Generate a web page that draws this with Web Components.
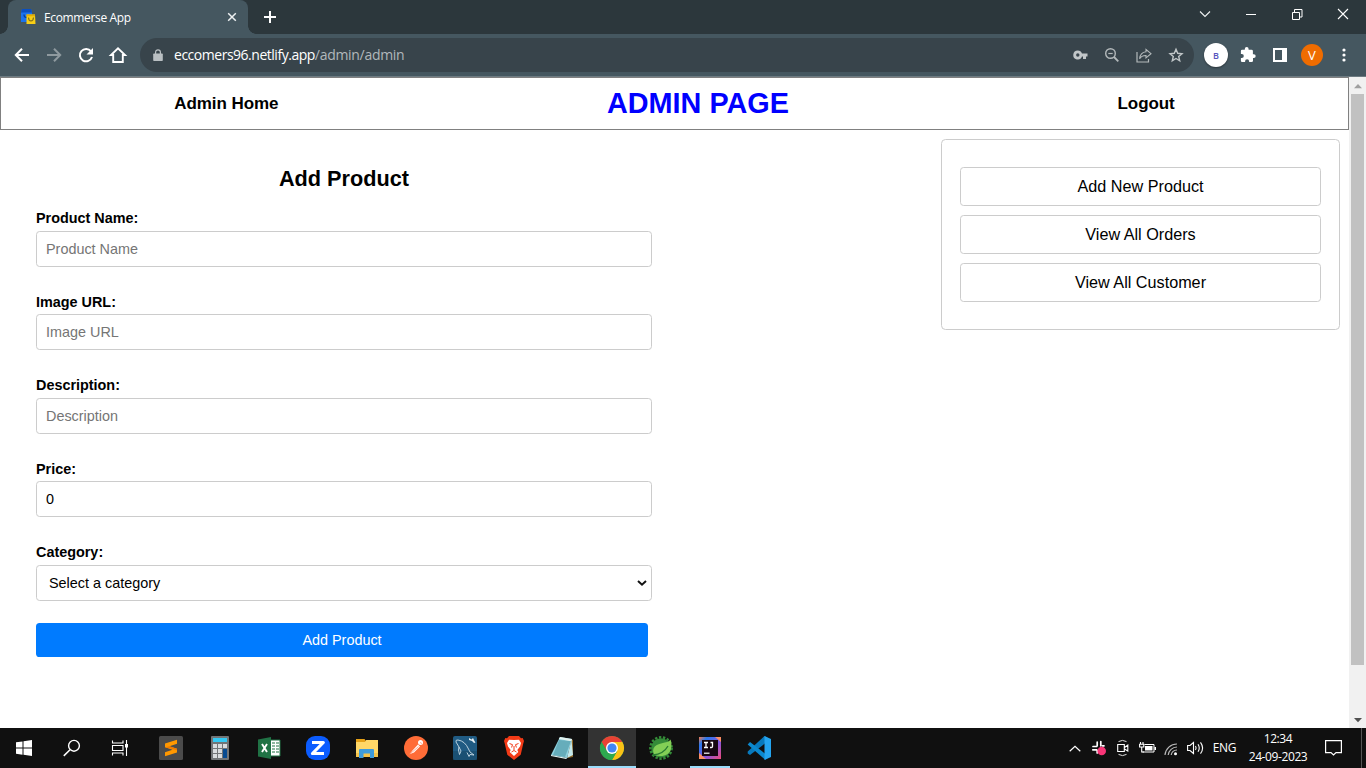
<!DOCTYPE html>
<html lang="en">
<head>
<meta charset="utf-8">
<title>Ecommerse App</title>
<style>
html,body{margin:0;height:100%;overflow:hidden;background:#fff;font-family:"Liberation Sans",Arial,sans-serif}
</style>
</head>
<body>
<desktop-screen></desktop-screen>
<script>
const UI = '"Open Sans","Noto Sans",sans-serif';
function define(name, markup, setup) {
  const t = document.createElement('template');
  t.innerHTML = markup;
  customElements.define(name, class extends HTMLElement {
    constructor() {
      super();
      this.attachShadow({mode: 'open'}).append(t.content.cloneNode(true));
    }
    connectedCallback() { if (setup) setup(this, this.shadowRoot); }
  });
}

/* Each entry: [width, height, svg content] */
const ICONS = {
  bags: [16,16,'<path d="M1 4 2 0h9l1 4v9H1z" fill="#1a73f0"/><path d="M1 3.500 2 0h9l1 3.500z" fill="#0b4fc0"/><path d="M4 5.500c0 4 4 3.500 4 1" fill="none" stroke="#0b3d94" stroke-width="1.200"/><path d="M6.500 5.500H15l.5 9.500h-9z" fill="#f8cf16"/><path d="M6.500 5.500H15v1.800H6.500z" fill="#e3ad07"/><path d="M8.500 8.500c.2 4.500 4.700 4.500 5 0" fill="none" stroke="#86721b" stroke-width="1.200"/>'],
  tabclose: [10,10,'<path d="m1.200 1.200 7.600 7.600m0-7.600L1.200 8.800" stroke="#eef1f2" stroke-width="1.500"/>'],
  plus: [14,14,'<path d="M7 1v12M1 7h12" stroke="#fff" stroke-width="2"/>'],
  chevdown: [12,8,'<path d="m1 1.500 5 5 5-5" fill="none" stroke="#f0f2f3" stroke-width="1.100"/>'],
  minimize: [10,10,'<path d="M0 5.500h10" stroke="#fff"/>'],
  restore: [11,11,'<path d="M.5 3.500h7v7h-7zM2.500 3V.5h7.500V8H8" fill="none" stroke="#fff"/>'],
  close: [12,12,'<path d="m1 1 10 10M11 1 1 11" stroke="#fff" stroke-width="1.100"/>'],
  back: [16,16,'<path d="M15 8H2.500M8 1.800 1.800 8 8 14.200" fill="none" stroke="#fff" stroke-width="2"/>'],
  forward: [16,16,'<path d="M1 8h12.500M8 1.800 14.200 8 8 14.200" fill="none" stroke="#8f9a9f" stroke-width="2"/>'],
  reload: [16,16,'<path d="M13 4.300A6.200 6.200 0 1 0 14 10" fill="none" stroke="#fff" stroke-width="2"/><path d="M15 1v6.500H8.500z" fill="#fff"/>'],
  home: [16,16,'<path d="M3.200 15V8H1l7-6.700L15 8h-2.200v7z" fill="none" stroke="#fff" stroke-width="1.900"/>'],
  lock: [10,12,'<path d="M1 4.500h8q.8 0 .8.800v5.900q0 .8-.8.800H1q-.8 0-.8-.8V5.300q0-.8.8-.8" fill="#b9bfc2"/><path d="M2.600 5V3.200a2.400 2.400 0 0 1 4.800 0V5" fill="none" stroke="#b9bfc2" stroke-width="1.200"/>'],
  key: [15,10,'<path fill-rule="evenodd" d="M4.800.5a4.500 4.500 0 0 1 4.200 3h5.500v3H13V9h-3V6.500H9A4.500 4.500 0 1 1 4.800.5M4.800 3.300a1.700 1.700 0 1 0 0 3.400 1.700 1.700 0 0 0 0-3.400" fill="#c1c6c8"/>'],
  zoomout: [14,14,'<circle cx="5.500" cy="5.500" r="4.800" fill="none" stroke="#b3b9bb" stroke-width="1.400"/><path d="m9 9 4.300 4.300" stroke="#b3b9bb" stroke-width="1.800"/><path d="M3.300 5.500h4.400" stroke="#b3b9bb" stroke-width="1.200"/>'],
  share: [16,15,'<path d="M1 4v10h11.500v-3" fill="none" stroke="#b3b9bb" stroke-width="1.200"/><path d="M10 1.500 15 5.700l-5 4.200V7.500C7 7.400 5 8.300 3.600 10.800 4 7 6 4.200 10 3.800z" fill="none" stroke="#b3b9bb" stroke-width="1.100"/>'],
  star: [14,14,'<path d="m7 1.300 1.700 4 4.300.4-3.300 2.800 1 4.300L7 10.500l-3.700 2.300 1-4.300L1 5.700l4.300-.4z" fill="none" stroke="#c1c6c8" stroke-width="1.400"/>'],
  puzzle: [16,16,'<path d="M13.800 7.200h-.9V4.100q0-1.400-1.400-1.400H8.600v-.8a1.900 1.900 0 0 0-3.800 0v.8H2.200Q.9 2.700.9 4v2.900h.9a2 2 0 0 1 0 4H.9v2.800q0 1.400 1.300 1.400h2.900v-.9a2 2 0 0 1 4 0v.9h2.500q1.400 0 1.400-1.400V11h.8a1.900 1.900 0 0 0 0-3.800" fill="#fff"/>'],
  panel: [14,14,'<path fill-rule="evenodd" d="M0 0h14v14H0zM2 2v10h7V2z" fill="#fff"/>'],
  dots: [4,14,'<g fill="#fff"><circle cx="2" cy="2" r="1.600"/><circle cx="2" cy="7" r="1.600"/><circle cx="2" cy="12" r="1.600"/></g>'],
  selarrow: [10,6,'<path d="m1 1 4 3.700L9 1" fill="none" stroke="#111" stroke-width="2"/>'],
  up: [8,4,'<path d="M4 0 8 4.300H0z" fill="#a0a0a0"/>'],
  down: [8,4,'<path d="M4 4.300 8 0H0z" fill="#505050"/>'],
  windows: [16,16,'<path d="M0 2.300 6.500 1.400V7.500H0zM7.500 1.200 16 0v7.500H7.500zM0 8.500h6.500v6.200L0 13.700zM7.500 8.500H16V16l-8.500-1.200z" fill="#fff"/>'],
  search: [18,18,'<circle cx="11" cy="6.800" r="5.400" fill="none" stroke="#fff" stroke-width="1.400"/><path d="m7 10.700-6.200 6.200" stroke="#fff" stroke-width="1.500"/>'],
  taskview: [16,16,'<path d="M.5.500V3h10.500V.5M.5 15.500V13h10.500v2.500M.5 5.500h10.500v5H.5z" fill="none" stroke="#fff" stroke-width="1.100"/><path d="M14.500 0v16" stroke="#fff" stroke-width="1.100"/><path d="M13 4h3v3.500h-3z" fill="#fff"/>'],
  sublime: [24,24,'<rect width="24" height="24" rx="1.500" fill="#4b4b4b"/><path d="m6 7.500 12-3.800v4.100l-7.500 2.500L18 12.700v3.800L6 20.300v-4.100l7.500-2.500L6 11.300z" fill="#ff9800"/><path d="m6 11.300 4.500-1 7.500 2.400v1.500z" fill="#ef7900"/>'],
  calc: [18,24,'<rect width="18" height="24" rx="1" fill="#727577"/><rect x="2" y="2" width="14" height="4" fill="#35c9f3"/><g fill="#d9dcde"><path d="M2 8h4v4H2zM7 8h4v4H7zM12 8h4v4h-4zM2 13h4v4H2zM7 13h4v4H7zM2 18h4v4H2zM7 18h4v4H7z"/></g><path d="M12 13h4v9h-4z" fill="#074b91"/>'],
  excel: [22,22,'<path d="M12 3h10v16H12z" fill="#fff" stroke="#207245"/><path d="M14 6h3M18 6h3M14 9h3M18 9h3M14 12h3M18 12h3M14 15h3M18 15h3" stroke="#207245" stroke-width="1.200"/><path d="M0 2.500 13 0v22L0 19.500z" fill="#207245"/><path d="m4 7 5 8M9 7l-5 8" stroke="#fff" stroke-width="1.900"/>'],
  zoomapp: [24,24,'<rect width="24" height="24" rx="9" fill="#0b5cff"/><path d="M6 6.500h11.300L6.500 17.500H18" fill="none" stroke="#fff" stroke-width="3.200" stroke-linejoin="round"/>'],
  folder: [22,19,'<path d="M0 0h8.500l1.500 2h12v16H0z" fill="#e6a117"/><path d="M0 3h9l1.200-2H22v17H0z" fill="#ffd767"/><path d="M0 14h22v4H0z" fill="#f4c34b"/><path d="M3 11q0-1 1-1h13q1 0 1 1v8h-4v-4.500H7.500V19H3z" fill="#3e9bdb"/>'],
  postman: [24,24,'<circle cx="12" cy="12" r="12" fill="#ff6c37"/><circle cx="16.500" cy="6.500" r="2.500" fill="#fff"/><path d="m14 8.500 2 2-6 6-4.500 1.800 3-3.800z" fill="#fff"/><path d="m6 18 8.500-7.500M16 6.500l2 1" stroke="#ff9673" stroke-width=".8"/>'],
  mysql: [24,24,'<rect width="24" height="24" rx="2" fill="#205b83"/><path d="M0 15h24v9H0z" fill="#174969" opacity=".6"/><path d="M6.500 18.500 5.500 14l.5-3-3-5q-.5-2.500 2-2 7 1 10.500 9l1.500 3 4 3-4-.5-1 2-2-4M6 11l2 4-1.500 3.500" fill="none" stroke="#c9dce7" stroke-width=".9"/><path d="m16 2 2.500 1.500L20 2l1.500 3 1 1.500-1.500.5-2-2-3-1" fill="#e8f1f5"/>'],
  brave: [20,24,'<path d="M5 0h10l2 2.200 1.700-.2 1.300 3-.8 2.800-2.500 11L10 24l-6.700-5.200-2.500-11L0 5l1.300-3 1.700.2z" fill="#f33a16"/><path d="m10 4 5-.3L17 7l-1 3.500-2.700 3.500 1 2L10 20l-4.300-4 1-2L4 10.500 3 7l2-3.300z" fill="#fff"/><path d="m5.500 7.500 3 1.200-.9 2.800M14.500 7.500l-3 1.200.9 2.800M10 10v4M7.500 16 10 14.500l2.500 1.500" fill="none" stroke="#f33a16"/>'],
  notepad: [24,22,'<path d="m20 2 2 1v17l-5 1z" fill="#896324"/><path d="m9 0 12 2-5 19-16-3z" fill="#8ed2df"/><path d="m8 3 12 1-6 16-12-2z" fill="#468e9d" opacity=".55"/><path d="m9 0 12 2-.6 2.200L7.800 2z" fill="#e4f3ef"/><path d="m20.500 3 1.500 15-6 3z" fill="#c3e8eb"/><path d="m0 18 16 3-.8 1L0 19z" fill="#e9fafa"/>'],
  chrome: [24,24,'<circle cx="12" cy="12" r="12" fill="#2da94f"/><path d="M12 12 1.600 6A12 12 0 0 1 22.400 6z" fill="#e94235"/><path d="M12 6h10.400A12 12 0 0 1 12 24l5.200-9z" fill="#fbc116"/><path d="M1.600 6 6.800 15l5.200-3V6z" fill="#e94235"/><path d="m1.600 6 5.200 9L12 18v6A12 12 0 0 1 1.600 6" fill="#2da94f"/><path d="m17.200 15-5.200 9v-6z" fill="#2da94f"/><circle cx="12" cy="12" r="6" fill="#fff"/><circle cx="12" cy="12" r="4.600" fill="#4286f5"/>'],
  spring: [24,24,'<circle cx="12" cy="12" r="10.700" fill="none" stroke="#348b38" stroke-width="2.400" stroke-dasharray="2.400 1.600"/><circle cx="12" cy="12" r="9.800" fill="#348b38"/><path d="M21.500 3.500C19 8 7 6 4.500 12.500c-1 3 .2 5 1.200 6.500 7 2.500 14.800.5 16.300-6 .7-3.500.5-7-.5-9.500" fill="#83cf56"/><path d="M4 19c6-.5 12-3.500 15-9" fill="none" stroke="#287b31" stroke-width="1.300"/>'],
  idea: [22,22,'<defs><linearGradient id="g" x1="0" y1="0" x2="1" y2="1"><stop stop-color="#f97a4a"/><stop offset=".2" stop-color="#2878ee"/><stop offset=".6" stop-color="#8957dc"/><stop offset="1" stop-color="#f04a78"/></linearGradient></defs><path d="M0 0h22v22H0z" fill="url(#g)"/><path d="M16 0h6v5zM0 16v6h7z" fill="#fd8d63"/><path d="M3 3h16v16H3z" fill="#160711"/><path d="M5 5.500h4M7 5.500v5M5 10.500h4M11.500 5.500h2v4q0 1-1.200 1H11" fill="none" stroke="#fff" stroke-width="1.300"/><path d="M5 15.500h5.500v1.500H5z" fill="#ccc"/>'],
  vscode: [24,24,'<path d="m17.500 0-16.800 15.500v2L3 19l20-15.500z" fill="#0879bc"/><path d="M.7 8.500 3 6l15.500 12V24L.7 8.500" fill="#0b88ce"/><path d="m17.500 0 6.500 3v18l-6.500 3z" fill="#24a4ef"/>'],
  chevup: [12,7,'<path d="m.7 6.300 5.300-5 5.300 5" fill="none" stroke="#fff" stroke-width="1.200"/>'],
  slack: [16,16,'<g stroke="#fff" stroke-width="1.700" stroke-linecap="round"><path d="M6.200 2.200v3.600M9.800 1.500v4.300M2 6.500h3.500M11.500 5.800h1.500M1.800 9.800h4M6.200 10.500v2.500"/></g><circle cx="10.700" cy="11" r="4.300" fill="#f73577"/>'],
  meet: [12,16,'<path d="M.7 4.500h6.600v7H.7zM7.500 7.500 10.800 5v6L7.500 9" fill="none" stroke="#fff" stroke-width="1.100"/><path d="M1.500 1.600Q5.500-.8 9.500 1.600M1.500 14.400q4 2.400 8 0" fill="none" stroke="#ddd"/>'],
  battery: [17,12,'<path d="M5.500 2.500h9.500v7.500H3.500" fill="none" stroke="#fff"/><path d="M6 4h7.500v4.500H6zM15.500 5H17v3h-1.500z" fill="#fff"/><path d="M1.500 0v2M4 0v2M.6 2.300h4.200V5H.6zM2.700 5.500v4.500H5" fill="none" stroke="#fff" stroke-width="1.100"/>'],
  wifi: [14,14,'<g fill="none" stroke="#b8b8b8" stroke-width="1.200" transform="translate(0 1)"><path d="M1 13A12 12 0 0 1 13 2M4.200 13A9 9 0 0 1 13 5M7.200 13A6 6 0 0 1 13 8"/></g><circle cx="11.500" cy="12.700" r="1.500" fill="#fff"/>'],
  volume: [17,14,'<path d="M.6 4.500H3l3.500-3v11L3 9.500H.6z" fill="none" stroke="#fff" stroke-width="1.100"/><path d="M8.500 5q1.200 2 0 4M11 3.200q2.500 3.800 0 7.600M13.500 1.300q4.200 5.700 0 11.400" fill="none" stroke="#fff" stroke-width="1.100"/>'],
  notice: [17,16,'<path d="M.6.600h15.800v12H11L8.500 15 6 12.600H.6z" fill="none" stroke="#fff" stroke-width="1.200"/>']
};
define('ui-icon', '<style>:host{display:flex;flex:none}svg{display:block;overflow:visible}</style>', (el, root) => {
  const [w, h, body] = ICONS[el.getAttribute('name')];
  root.innerHTML += `<svg width="${w}" height="${h}" viewBox="0 0 ${w} ${h}">${body}</svg>`;
});

define('tab-strip', `<style>
:host{display:flex;height:34px;background:#2c373c;color:#fff;font:12px ${UI}}
.tab{position:relative;box-sizing:border-box;width:240px;height:34px;margin-left:8px;padding:0 11px 0 12px;background:#455760;border-radius:8px 8px 0 0;display:flex;align-items:center}
.tab::before,.tab::after{content:"";position:absolute;bottom:0;width:8px;height:8px}
.tab::before{left:-8px;background:radial-gradient(circle at 0 0,transparent 7.500px,#455760 8px)}
.tab::after{right:-8px;background:radial-gradient(circle at 100% 0,transparent 7.500px,#455760 8px)}
.t{flex:1;margin-left:8px;letter-spacing:-.35px;white-space:nowrap}
.plus{margin:10px 0 0 15px}
.win{margin-left:auto;display:flex;height:28px}
.win span{width:46px;display:flex;align-items:center;justify-content:center}
</style>
<div class="tab"><ui-icon name="bags"></ui-icon><span class="t">Ecommerse App</span><ui-icon name="tabclose"></ui-icon></div>
<ui-icon class="plus" name="plus"></ui-icon>
<div class="win"><span><ui-icon name="chevdown"></ui-icon></span><span><ui-icon name="minimize"></ui-icon></span><span><ui-icon name="restore"></ui-icon></span><span><ui-icon name="close"></ui-icon></span></div>`);

define('tool-bar', `<style>
:host{display:flex;box-sizing:border-box;height:43px;padding:0 6px;align-items:center;background:#455760;border-bottom:1px solid #6d7b82;font:14px ${UI};color:#fff}
.c{width:32px;height:32px;flex:none;display:flex;align-items:center;justify-content:center}
.box{width:1054px;height:34px;margin:0 6px;border-radius:17px;background:#38444b;display:flex;align-items:center;box-sizing:border-box;padding:0 2px}
.url{flex:1;display:flex;white-space:nowrap;letter-spacing:-.48px;line-height:18px;padding-bottom:1px}
.url i{font-style:normal;color:#b1b8bb;letter-spacing:-.3px}
.b{width:24px;height:24px;border-radius:50%;background:#fff;color:#5755bd;font-size:9px;font-weight:600;display:flex;align-items:center;justify-content:center;box-shadow:0 1px 2px #0006}
.v{width:22px;height:22px;border-radius:50%;background:#ef6c00;font-size:13px;display:flex;align-items:center;justify-content:center}
</style>
<span class="c"><ui-icon name="back"></ui-icon></span><span class="c"><ui-icon name="forward"></ui-icon></span><span class="c"><ui-icon name="reload"></ui-icon></span><span class="c"><ui-icon name="home"></ui-icon></span>
<div class="box"><span class="c"><ui-icon name="lock"></ui-icon></span><span class="url"><span>eccomers96.netlify.app</span><i>/admin/admin</i></span>
<span class="c"><ui-icon name="key"></ui-icon></span><span class="c"><ui-icon name="zoomout"></ui-icon></span><span class="c"><ui-icon name="share"></ui-icon></span><span class="c"><ui-icon name="star"></ui-icon></span></div>
<span class="c"><span class="b">B</span></span><span class="c"><ui-icon name="puzzle"></ui-icon></span><span class="c"><ui-icon name="panel"></ui-icon></span><span class="c"><span class="v">V</span></span><span class="c"><ui-icon name="dots"></ui-icon></span>`);

define('page-header', `<style>
:host{display:flex;box-sizing:border-box;height:53px;border:1px solid #808080;padding:0 9px;justify-content:space-around;align-items:center;font-weight:bold;font-size:17px}
h1{margin:0;font-size:28.800px;color:#00f;line-height:50px;padding-bottom:1px}
span{letter-spacing:-.08px}
</style><span>Admin Home</span><h1>ADMIN PAGE</h1><span>Logout</span>`);

define('form-field', `<style>
:host{display:block;height:83.400px;width:616px;font-size:14.400px}
label{display:block;font-weight:bold;line-height:16px;padding-top:.4px;margin-bottom:4.600px}
.box{display:flex;align-items:center;box-sizing:border-box;height:36px;border:1px solid #ccc;border-radius:3.600px;padding:0 9px}
input{flex:1;border:0;padding:0;margin:0;background:none;outline:0;font:inherit;color:#000}
input::placeholder{color:#757575}
.select{flex:1;padding-left:3px}
.box.s{padding-right:4px}
</style><label></label><div class="box"></div>`, (el, root) => {
  root.querySelector('label').textContent = el.getAttribute('label');
  const box = root.querySelector('.box');
  if (el.hasAttribute('select')) {
    box.classList.add('s');
    box.innerHTML = '<span class="select" role="combobox"></span><ui-icon name="selarrow"></ui-icon>';
    box.firstChild.textContent = el.getAttribute('select');
  } else {
    const input = document.createElement('input');
    input.placeholder = el.getAttribute('placeholder') || '';
    input.value = el.getAttribute('value') || '';
    box.append(input);
  }
});

define('product-form', `<style>
:host{display:block;padding:36px 0 0 36px}
h2{margin:0;width:616px;text-align:center;font-size:21.700px;line-height:26px;margin-bottom:18px}
button{display:block;width:612px;height:34px;margin:-4px 0 0;padding:0;border:0;border-radius:3.600px;background:#007bff;color:#fff;font:14.400px "Liberation Sans",Arial,sans-serif}
</style><h2>Add Product</h2>
<form-field label="Product Name:" placeholder="Product Name"></form-field>
<form-field label="Image URL:" placeholder="Image URL"></form-field>
<form-field label="Description:" placeholder="Description"></form-field>
<form-field label="Price:" value="0"></form-field>
<form-field label="Category:" select="Select a category"></form-field>
<button>Add Product</button>`);

define('side-link', `<style>:host{display:flex;align-items:center;justify-content:center;box-sizing:border-box;height:39px;border:1px solid #ccc;border-radius:3.600px;font-size:16.200px}</style><slot></slot>`);
define('side-menu', `<style>:host{display:flex;flex-direction:column;gap:9px;box-sizing:border-box;width:399px;height:191px;margin:9px 9px 0 0;padding:27px 18px;border:1px solid #ccc;border-radius:4.500px}</style>
<side-link>Add New Product</side-link><side-link>View All Orders</side-link><side-link>View All Customer</side-link>`);

define('scroll-bar', `<style>:host{display:flex;flex-direction:column;width:17px;background:#f1f1f1;align-items:center}
.a{height:17px;display:flex;align-items:center}.thumb{width:13px;height:571px;background:#c1c1c1}.g{flex:1}</style>
<span class="a"><ui-icon name="up"></ui-icon></span><div class="thumb"></div><div class="g"></div><span class="a"><ui-icon name="down"></ui-icon></span>`);

define('task-app', `<style>:host{position:relative;width:48px;height:40px;display:flex;flex:none;align-items:center;justify-content:center}
:host([active]){background:#333}
:host([active])::after,:host([open])::after{content:"";position:absolute;bottom:0;left:0;right:0;height:2px;background:#9bdcfb}
:host([open])::after{left:4px;right:4px}</style>`, (el, root) => {
  const i = document.createElement('ui-icon');
  i.setAttribute('name', el.getAttribute('icon'));
  root.append(i);
});
define('task-bar', `<style>
:host{display:flex;height:40px;background:#101010;color:#fff;font:12px ${UI}}
.apps{display:flex;gap:1px;margin-left:3px}
.tray{display:flex;margin-left:auto;align-items:center}
.c{width:24px;display:flex;justify-content:center}
.eng{width:35px;text-align:center;letter-spacing:-.3px;padding-bottom:1px}
.clock{width:72px;text-align:center;line-height:18px;letter-spacing:-.4px;white-space:nowrap}
.n{width:38px;display:flex;justify-content:center}
.end{width:4px;height:40px;margin-left:9px;border-left:1px solid #555}
</style>
<task-app icon="windows"></task-app><task-app icon="search"></task-app><task-app icon="taskview"></task-app>
<div class="apps"><task-app icon="sublime"></task-app><task-app icon="calc"></task-app><task-app icon="excel"></task-app><task-app icon="zoomapp"></task-app><task-app icon="folder"></task-app><task-app icon="postman"></task-app><task-app icon="mysql"></task-app><task-app icon="brave"></task-app><task-app icon="notepad"></task-app><task-app icon="chrome" active></task-app><task-app icon="spring"></task-app><task-app icon="idea" open></task-app><task-app icon="vscode"></task-app></div>
<div class="tray"><span class="c"><ui-icon name="chevup"></ui-icon></span><span class="c"><ui-icon name="slack"></ui-icon></span><span class="c"><ui-icon name="meet"></ui-icon></span><span class="c"><ui-icon name="battery"></ui-icon></span><span class="c"><ui-icon name="wifi"></ui-icon></span><span class="c"><ui-icon name="volume"></ui-icon></span>
<span class="eng">ENG</span><div class="clock"><div>12:34</div><div>24-09-2023</div></div><span class="n"><ui-icon name="notice"></ui-icon></span><span class="end"></span></div>`);

define('desktop-screen', `<style>
:host{display:flex;flex-direction:column;width:1366px;height:768px;overflow:hidden}
.view{flex:1;display:flex;min-height:0}
main{flex:1;background:#fff}
.cols{display:flex;justify-content:space-between;align-items:flex-start}
</style><tab-strip></tab-strip><tool-bar></tool-bar>
<div class="view"><main><page-header></page-header><div class="cols"><product-form></product-form><side-menu></side-menu></div></main><scroll-bar></scroll-bar></div>
<task-bar></task-bar>`);
</script>
</body>
</html>
